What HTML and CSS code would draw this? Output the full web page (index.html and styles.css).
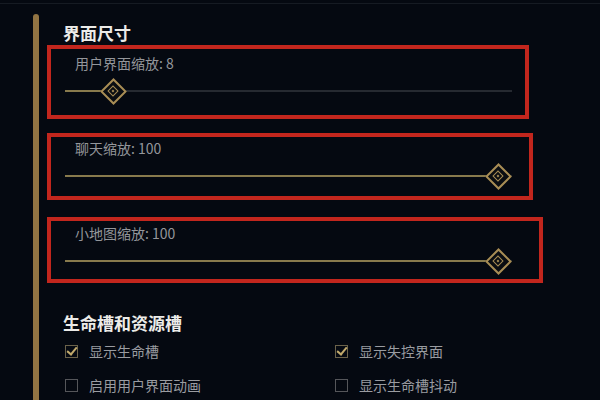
FILE: index.html
```html
<!DOCTYPE html>
<html lang="zh-CN">
<head>
    <meta charset="UTF-8">
    <meta name="viewport" content="width=device-width, initial-scale=1.0">
    <title>界面设置</title>
    <link rel="stylesheet" href="styles.css">
</head>
<body>
    <div class="topline"></div>
    <div class="page">
        <div class="rail"></div>
        <div class="settings">
            <h2 class="section-title">界面尺寸</h2>

            <div class="slider-box box-ui">
                <div class="slider-label">用户界面缩放: 8</div>
                <div class="slider" style="--value: 8">
                    <div class="track"></div>
                    <div class="fill"></div>
                    <div class="thumb"><span class="thumb-inner"></span></div>
                </div>
            </div>

            <div class="slider-box box-chat">
                <div class="slider-label">聊天缩放: 100</div>
                <div class="slider" style="--value: 100">
                    <div class="track"></div>
                    <div class="fill"></div>
                    <div class="thumb"><span class="thumb-inner"></span></div>
                </div>
            </div>

            <div class="slider-box box-map">
                <div class="slider-label">小地图缩放: 100</div>
                <div class="slider" style="--value: 100">
                    <div class="track"></div>
                    <div class="fill"></div>
                    <div class="thumb"><span class="thumb-inner"></span></div>
                </div>
            </div>

            <h2 class="section-title second">生命槽和资源槽</h2>

            <div class="options">
                <label class="option"><span class="check checked"></span>显示生命槽</label>
                <label class="option"><span class="check checked"></span>显示失控界面</label>
                <label class="option"><span class="check"></span>启用用户界面动画</label>
                <label class="option"><span class="check"></span>显示生命槽抖动</label>
            </div>
        </div>
    </div>
</body>
</html>
```

FILE: styles.css
```css
body {
    margin: 0;
    background: #050911;
    font-family: "Noto Sans CJK SC", "Noto Sans", sans-serif;
    color: #94969b;
    height: 400px;
    overflow: hidden;
}

.topline {
    height: 3px;
    border-bottom: 1px solid #161b23;
}

.page {
    display: flex;
    padding-left: 33px;
    padding-top: 10px;
}

.rail {
    width: 6px;
    height: 400px;
    background: #927443;
    border-radius: 3px 3px 0 0;
    margin-right: 8px;
}

.settings {
    flex: 1;
}

.section-title {
    margin: 9px 0 2px 16px;
    font-size: 17px;
    line-height: 20px;
    font-weight: bold;
    color: #ecebe8;
}

.section-title.second {
    margin-top: 30px;
    margin-bottom: 0;
}

/* red outlined slider groups */
.slider-box {
    border: 4px solid #c2261d;
    padding: 4px 0 8px 14px;
    box-sizing: border-box;
}

.box-ui {
    width: 482px;
    height: 74px;
    padding-top: 6px;
}

.box-chat {
    width: 486px;
    height: 67px;
    margin-top: 14px;
    padding-top: 3px;
}

.box-map {
    width: 496px;
    height: 66px;
    margin-top: 17px;
    padding-top: 4px;
}

.slider-label {
    font-size: 14px;
    line-height: 16px;
    padding-left: 10px;
}

.slider {
    position: relative;
    width: 447px;
    height: 28px;
    margin-top: 6px;
}

.track {
    position: absolute;
    left: 0;
    right: 0;
    top: 13px;
    height: 2px;
    background: #262a31;
}

.fill {
    position: absolute;
    left: 0;
    top: 13px;
    height: 2px;
    width: calc((100% - 28px) * var(--value) / 100 + 4px);
    background: #887a4d;
}

.thumb {
    position: absolute;
    top: 0;
    left: calc((100% - 28px) * var(--value) / 100);
    width: 28px;
    height: 28px;
}

.thumb::before {
    content: "";
    position: absolute;
    left: 5px;
    top: 5px;
    width: 15px;
    height: 15px;
    border: 2px solid #a88d55;
    background: #0a0d12;
    transform: rotate(45deg);
}

.thumb-inner {
    position: absolute;
    left: 10px;
    top: 10px;
    width: 6px;
    height: 6px;
    border: 1px solid #a88d55;
    transform: rotate(45deg);
}

.thumb-inner::after {
    content: "";
    position: absolute;
    left: 2px;
    top: 2px;
    width: 2px;
    height: 2px;
    background: #a88d55;
}

/* checkbox grid */
.options {
    display: grid;
    grid-template-columns: 270px 200px;
    row-gap: 14px;
    margin-top: 8px;
    padding-left: 18px;
}

.option {
    display: flex;
    align-items: center;
    height: 20px;
    font-size: 14px;
    color: #9a9ca1;
}

.check {
    position: relative;
    width: 11px;
    height: 11px;
    border: 1.5px solid #55565a;
    margin-right: 11px;
}

.check.checked {
    border-color: #6b624a;
}

.check.checked::after {
    content: "";
    position: absolute;
    left: 3px;
    top: -1px;
    width: 4px;
    height: 8px;
    border: solid #c2aa6c;
    border-width: 0 2px 2px 0;
    transform: rotate(40deg);
}
```
